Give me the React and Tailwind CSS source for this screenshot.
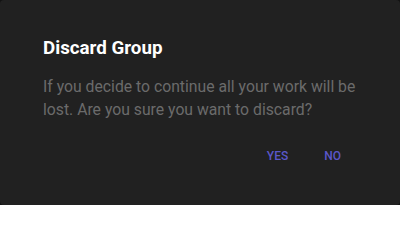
export default function App() {
  return (
    <div className="w-[400px] h-[205px] bg-[#121212]">
      <div
        className="w-full h-full rounded-[4px] bg-[#212121] flex flex-col pl-[43px] pr-[30px] pt-[36px]"
        style={{ fontFamily: 'Roboto, "Liberation Sans", sans-serif' }}
      >
        <h2 className="text-[18.75px] leading-[25px] font-bold text-white">Discard Group</h2>
        <p className="mt-[14px] text-[15.75px] leading-[23px] text-[#6b6b6b]">
          If you decide to continue all your work will be lost. Are you sure you want to discard?
        </p>
        <div className="mt-[27px] flex justify-end gap-[36px] pr-[29px]">
          <button className="text-[12px] leading-[16px] font-medium text-[#5b57c9] uppercase">Yes</button>
          <button className="text-[12px] leading-[16px] font-medium text-[#5b57c9] uppercase">No</button>
        </div>
      </div>
    </div>
  )
}
